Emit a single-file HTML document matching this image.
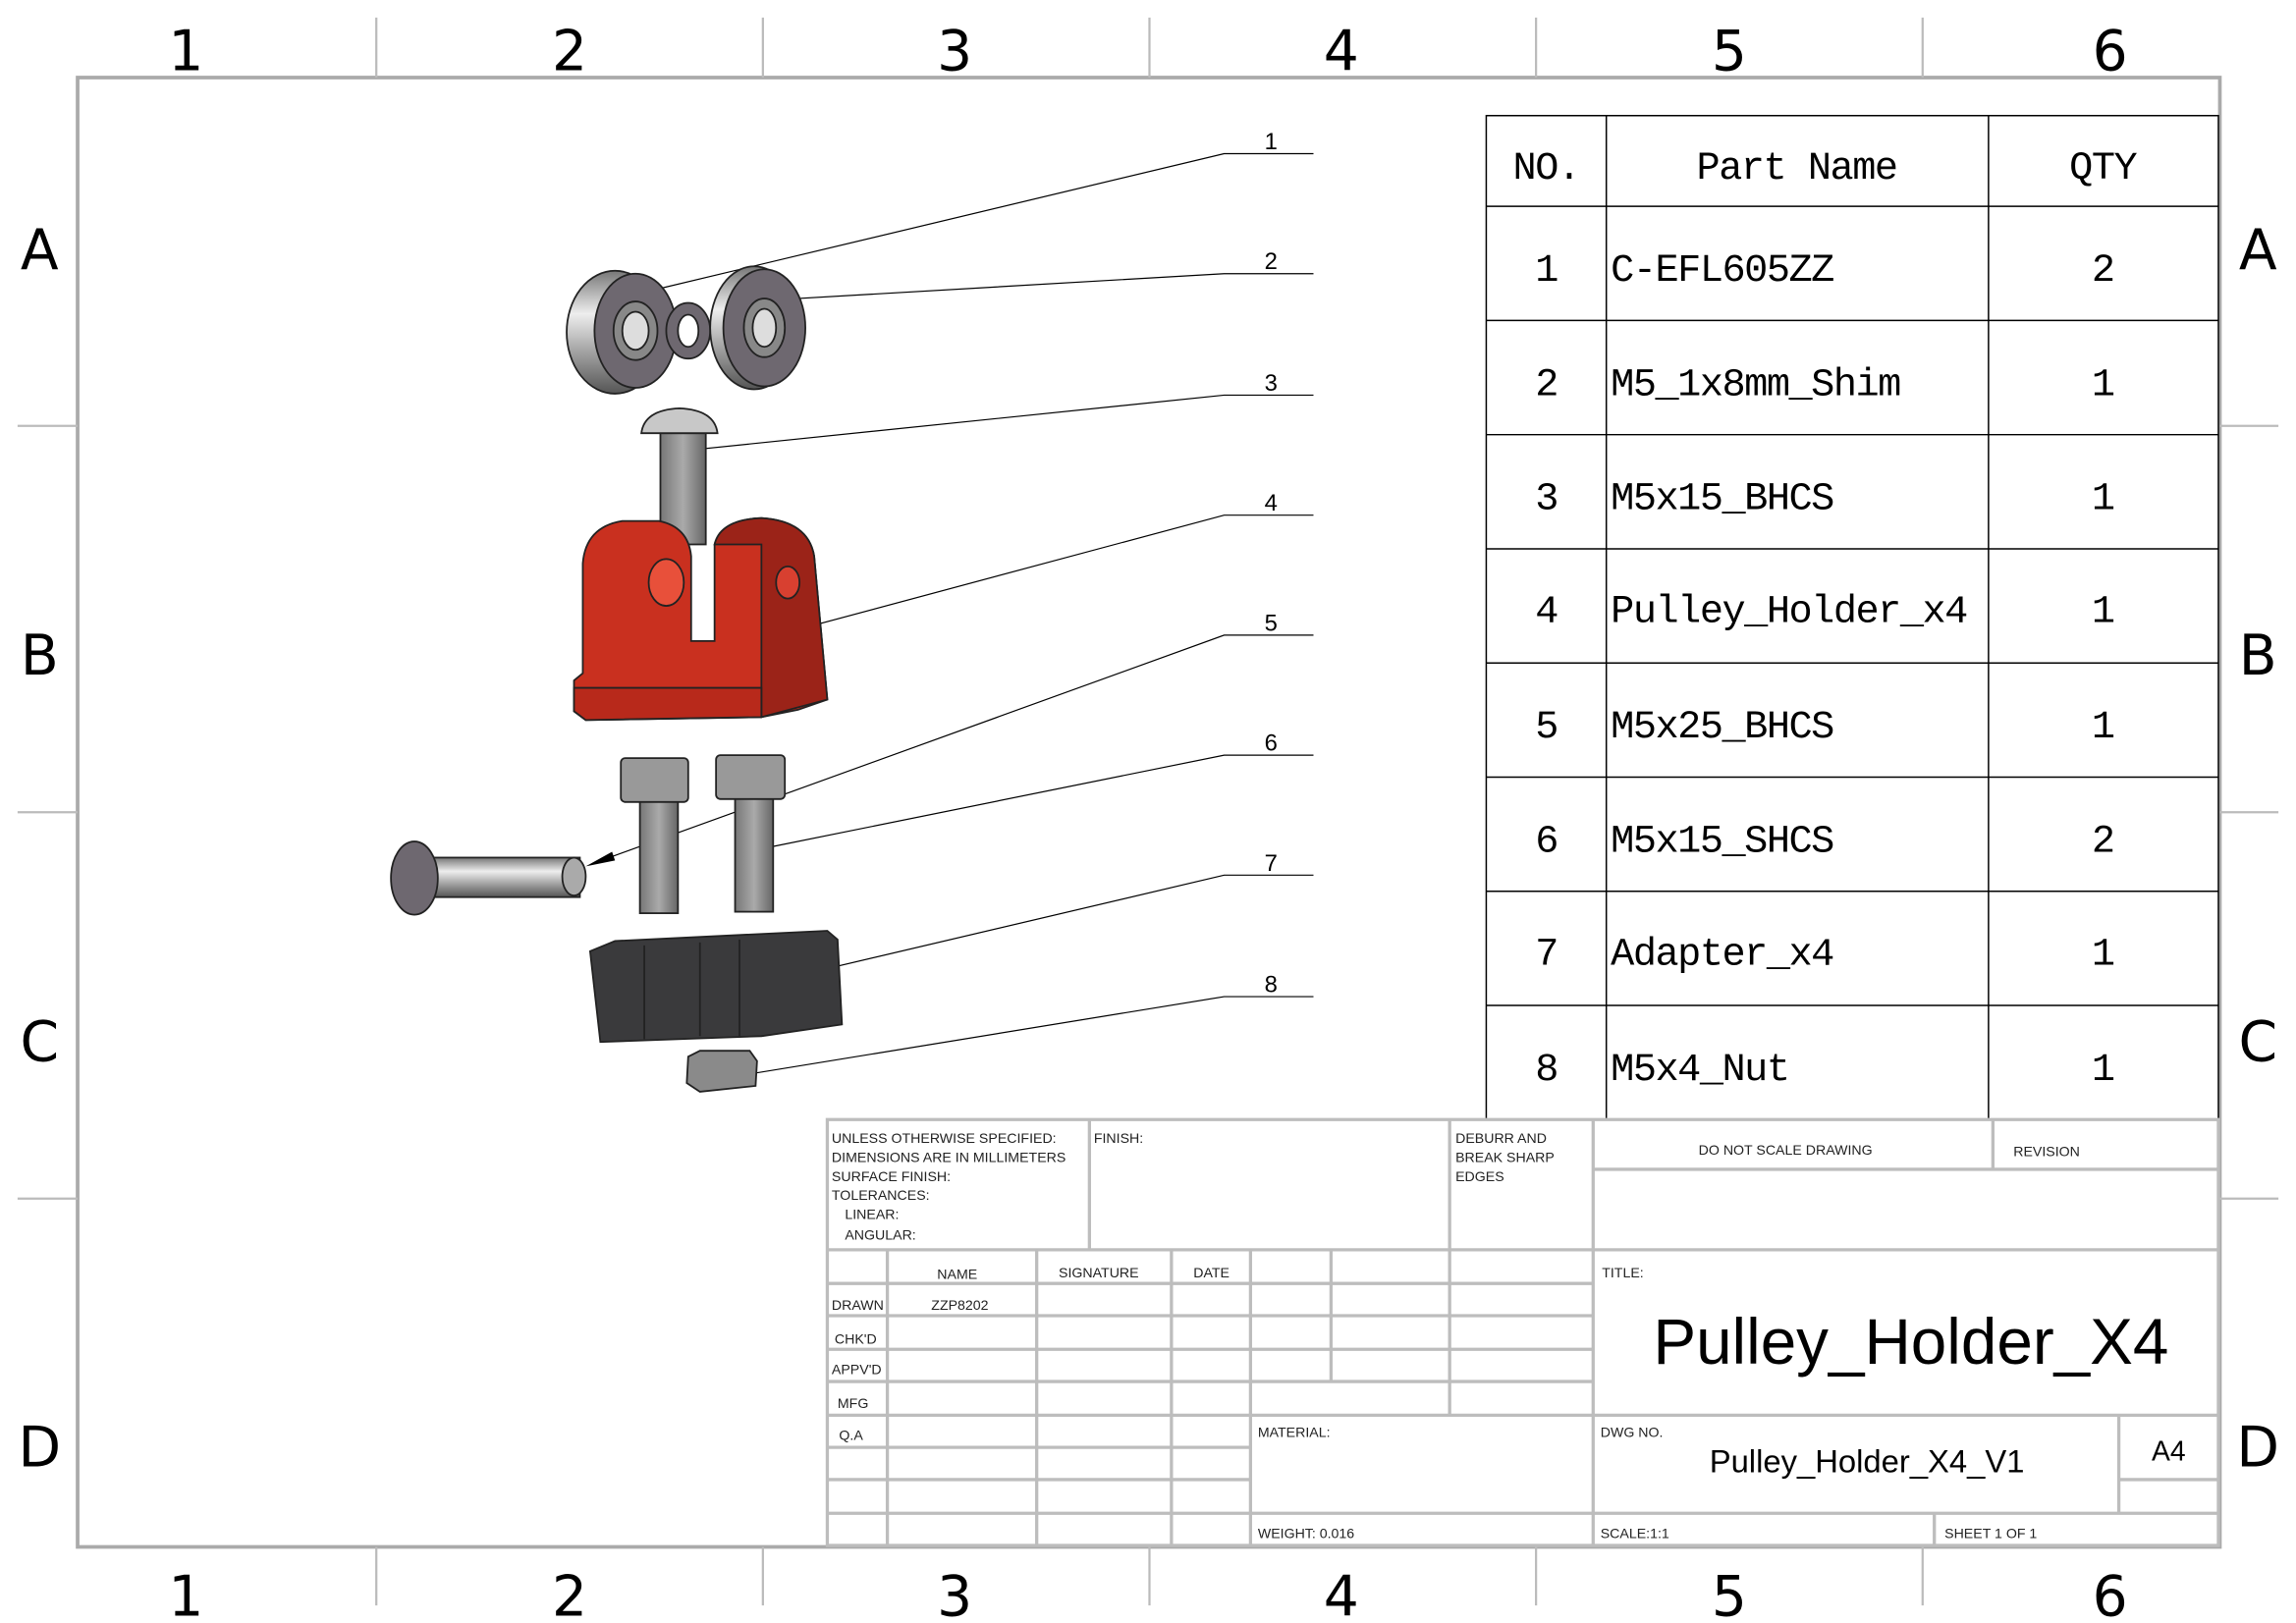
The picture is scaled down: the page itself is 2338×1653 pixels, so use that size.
<!DOCTYPE html>
<html><head><meta charset="utf-8"><style>
html,body{margin:0;padding:0;background:#fff;}
svg{display:block;}
.z{font-family:"DejaVu Sans","Liberation Sans",sans-serif;font-size:38px;fill:#000;text-anchor:middle;}
.m{font-family:"Liberation Mono",monospace;font-size:27px;fill:#000;letter-spacing:-1px;}
.s{font-family:"Liberation Sans",sans-serif;font-size:9.5px;fill:#222;}
.g{stroke:#bdbdbd;stroke-width:2.2;fill:none;}
.b{stroke:#000;stroke-width:1;fill:none;}
</style></head><body>
<svg width="2338" height="1653" viewBox="0 0 1568 1109" preserveAspectRatio="none" xmlns="http://www.w3.org/2000/svg">
<rect x="0" y="0" width="1568" height="1109" fill="#fff"/>
<rect x="53" y="53" width="1463" height="1004" fill="none" stroke="#aaa" stroke-width="2.5"/>
<g stroke="#bbb" stroke-width="1.5">
<line x1="257" y1="12" x2="257" y2="53"/><line x1="521" y1="12" x2="521" y2="53"/><line x1="785" y1="12" x2="785" y2="53"/><line x1="1049" y1="12" x2="1049" y2="53"/><line x1="1313" y1="12" x2="1313" y2="53"/>
<line x1="257" y1="1057" x2="257" y2="1097"/><line x1="521" y1="1057" x2="521" y2="1097"/><line x1="785" y1="1057" x2="785" y2="1097"/><line x1="1049" y1="1057" x2="1049" y2="1097"/><line x1="1313" y1="1057" x2="1313" y2="1097"/>
<line x1="12" y1="291" x2="53" y2="291"/><line x1="12" y1="555" x2="53" y2="555"/><line x1="12" y1="819" x2="53" y2="819"/>
<line x1="1516" y1="291" x2="1556" y2="291"/><line x1="1516" y1="555" x2="1556" y2="555"/><line x1="1516" y1="819" x2="1556" y2="819"/>
</g>
<g class="z">
<text x="127" y="48">1</text><text x="389" y="48">2</text><text x="652" y="48">3</text><text x="916" y="48">4</text><text x="1181" y="48">5</text><text x="1441" y="48">6</text>
<text x="127" y="1104">1</text><text x="389" y="1104">2</text><text x="652" y="1104">3</text><text x="916" y="1104">4</text><text x="1181" y="1104">5</text><text x="1441" y="1104">6</text>
<text x="27" y="184">A</text><text x="27" y="461">B</text><text x="27" y="725">C</text><text x="27" y="1002">D</text>
<text x="1542" y="184">A</text><text x="1542" y="461">B</text><text x="1542" y="725">C</text><text x="1542" y="1002">D</text>
</g>
<g class="b">
<rect x="1015" y="79" width="500" height="686"/>
<line x1="1097" y1="79" x2="1097" y2="765"/><line x1="1358" y1="79" x2="1358" y2="765"/>
<line x1="1015" y1="141" x2="1515" y2="141"/><line x1="1015" y1="219" x2="1515" y2="219"/><line x1="1015" y1="297" x2="1515" y2="297"/><line x1="1015" y1="375" x2="1515" y2="375"/><line x1="1015" y1="453" x2="1515" y2="453"/><line x1="1015" y1="531" x2="1515" y2="531"/><line x1="1015" y1="609" x2="1515" y2="609"/><line x1="1015" y1="687" x2="1515" y2="687"/>
</g>
<g class="m">
<text x="1056" y="122" text-anchor="middle">NO.</text><text x="1227" y="122" text-anchor="middle">Part Name</text><text x="1436" y="122" text-anchor="middle">QTY</text>
<text x="1056" y="192" text-anchor="middle">1</text><text x="1100" y="192">C-EFL605ZZ</text><text x="1436" y="192" text-anchor="middle">2</text>
<text x="1056" y="270" text-anchor="middle">2</text><text x="1100" y="270">M5_1x8mm_Shim</text><text x="1436" y="270" text-anchor="middle">1</text>
<text x="1056" y="348" text-anchor="middle">3</text><text x="1100" y="348">M5x15_BHCS</text><text x="1436" y="348" text-anchor="middle">1</text>
<text x="1056" y="425" text-anchor="middle">4</text><text x="1100" y="425">Pulley_Holder_x4</text><text x="1436" y="425" text-anchor="middle">1</text>
<text x="1056" y="504" text-anchor="middle">5</text><text x="1100" y="504">M5x25_BHCS</text><text x="1436" y="504" text-anchor="middle">1</text>
<text x="1056" y="582" text-anchor="middle">6</text><text x="1100" y="582">M5x15_SHCS</text><text x="1436" y="582" text-anchor="middle">2</text>
<text x="1056" y="659" text-anchor="middle">7</text><text x="1100" y="659">Adapter_x4</text><text x="1436" y="659" text-anchor="middle">1</text>
<text x="1056" y="738" text-anchor="middle">8</text><text x="1100" y="738">M5x4_Nut</text><text x="1436" y="738" text-anchor="middle">1</text>
</g>
<g class="g">
<rect x="565" y="765" width="950" height="291"/>
<line x1="565" y1="854" x2="1515" y2="854"/>
<line x1="744" y1="765" x2="744" y2="854"/><line x1="990" y1="765" x2="990" y2="854"/><line x1="1088" y1="765" x2="1088" y2="1056"/>
<line x1="1088" y1="799" x2="1515" y2="799"/><line x1="1361" y1="765" x2="1361" y2="799"/>
<line x1="565" y1="877" x2="1088" y2="877"/><line x1="565" y1="899" x2="1088" y2="899"/><line x1="565" y1="922" x2="1088" y2="922"/><line x1="565" y1="944" x2="1088" y2="944"/><line x1="565" y1="967" x2="1515" y2="967"/>
<line x1="565" y1="989" x2="854" y2="989"/><line x1="565" y1="1011" x2="854" y2="1011"/><line x1="565" y1="1034" x2="1515" y2="1034"/>
<line x1="606" y1="854" x2="606" y2="1056"/><line x1="708" y1="854" x2="708" y2="1056"/><line x1="800" y1="854" x2="800" y2="1056"/><line x1="854" y1="854" x2="854" y2="1056"/>
<line x1="909" y1="854" x2="909" y2="944"/><line x1="990" y1="854" x2="990" y2="967"/>
<line x1="1447" y1="967" x2="1447" y2="1034"/><line x1="1447" y1="1011" x2="1515" y2="1011"/><line x1="1321" y1="1034" x2="1321" y2="1056"/>
</g>
<g class="s">
<text x="568" y="781">UNLESS OTHERWISE SPECIFIED:</text><text x="568" y="794">DIMENSIONS ARE IN MILLIMETERS</text><text x="568" y="807">SURFACE FINISH:</text><text x="568" y="820">TOLERANCES:</text><text x="577" y="833">LINEAR:</text><text x="577" y="847">ANGULAR:</text>
<text x="747" y="781">FINISH:</text>
<text x="994" y="781">DEBURR AND</text><text x="994" y="794">BREAK SHARP</text><text x="994" y="807">EDGES</text>
<text x="1160" y="789">DO NOT SCALE DRAWING</text><text x="1375" y="790">REVISION</text>
<text x="640" y="874">NAME</text><text x="723" y="873">SIGNATURE</text><text x="815" y="873">DATE</text>
<text x="568" y="895">DRAWN</text><text x="636" y="895">ZZP8202</text>
<text x="570" y="918">CHK'D</text><text x="568" y="939">APPV'D</text><text x="572" y="962">MFG</text><text x="573" y="984">Q.A</text>
<text x="859" y="982">MATERIAL:</text><text x="1093" y="982">DWG NO.</text><text x="1094" y="873">TITLE:</text>
<text x="859" y="1051">WEIGHT: 0.016</text><text x="1093" y="1051">SCALE:1:1</text><text x="1328" y="1051">SHEET 1 OF 1</text>
</g>
<text x="1305" y="932" text-anchor="middle" font-family="Liberation Sans,sans-serif" font-size="44">Pulley_Holder_X4</text>
<text x="1275" y="1006" text-anchor="middle" font-family="Liberation Sans,sans-serif" font-size="22">Pulley_Holder_X4_V1</text>
<text x="1481" y="998" text-anchor="middle" font-family="Liberation Sans,sans-serif" font-size="19">A4</text>
<g stroke="#000" stroke-width="0.8" fill="none">
<polyline points="897,105 836,105 447,198"/><polyline points="897,187 836,187 527,205"/><polyline points="897,270 836,270 467,308"/><polyline points="897,352 836,352 538,432"/>
<polyline points="897,434 836,434 405,590"/><polyline points="897,516 836,516 520,580"/><polyline points="897,598 836,598 543,667"/><polyline points="897,681 836,681 505,735"/>
</g>
<polygon points="400,592 418,582 420,588" fill="#000"/>
<g font-family="Liberation Sans,sans-serif" font-size="16" fill="#000" text-anchor="middle">
<text x="868" y="102">1</text><text x="868" y="184">2</text><text x="868" y="267">3</text><text x="868" y="349">4</text><text x="868" y="431">5</text><text x="868" y="513">6</text><text x="868" y="595">7</text><text x="868" y="678">8</text>
</g>
<defs>
<linearGradient id="met" x1="0" y1="0" x2="0" y2="1"><stop offset="0" stop-color="#777"/><stop offset=".35" stop-color="#eee"/><stop offset=".7" stop-color="#999"/><stop offset="1" stop-color="#555"/></linearGradient>
<linearGradient id="shank" x1="0" y1="0" x2="1" y2="0"><stop offset="0" stop-color="#777"/><stop offset=".5" stop-color="#aaa"/><stop offset="1" stop-color="#666"/></linearGradient>
</defs>
<g stroke="#222" stroke-width="1.2">
<ellipse cx="420" cy="227" rx="33" ry="42" fill="url(#met)"/>
<ellipse cx="434" cy="226" rx="28" ry="39" fill="#6e6870"/>
<ellipse cx="434" cy="226" rx="15" ry="20" fill="#888"/>
<ellipse cx="434" cy="226" rx="9" ry="13" fill="#ddd"/>
<ellipse cx="470" cy="226" rx="15" ry="19" fill="#6e6870"/>
<ellipse cx="470" cy="226" rx="7" ry="11" fill="#fff"/>
<ellipse cx="515" cy="224" rx="30" ry="42" fill="url(#met)"/>
<ellipse cx="522" cy="224" rx="28" ry="40" fill="#6e6870"/>
<ellipse cx="522" cy="224" rx="14" ry="20" fill="#888"/>
<ellipse cx="522" cy="224" rx="8" ry="13" fill="#ddd"/>
<rect x="451" y="296" width="31" height="76" fill="url(#shank)"/>
<path d="M438,296 Q440,280 464,279 Q488,280 490,296 Z" fill="#c8c8c8"/>
<path d="M398,460 L398,385 Q400,360 425,356 L450,356 Q470,360 472,380 L472,438 L488,438 L488,372 Q492,355 520,354 Q552,356 556,380 L565,478 L545,485 L520,490 L400,492 L392,486 L392,465 Z" fill="#c9301f"/>
<path d="M488,372 Q492,355 520,354 Q552,356 556,380 L565,478 L520,490 L520,372 Z" fill="#9b2318"/>
<path d="M392,470 L520,470 L520,490 L400,492 L392,486 Z" fill="#b8291b"/>
<ellipse cx="455" cy="398" rx="12" ry="16" fill="#e8503a"/>
<ellipse cx="538" cy="398" rx="8" ry="11" fill="#d84030"/>
<rect x="280" y="586" width="116" height="27" fill="url(#met)"/>
<ellipse cx="283" cy="600" rx="16" ry="25" fill="#6e6870"/>
<ellipse cx="392" cy="599" rx="8" ry="13" fill="#aaa"/>
<rect x="437" y="545" width="26" height="79" fill="url(#shank)"/>
<rect x="424" y="518" width="46" height="30" rx="3" fill="#999"/>
<rect x="502" y="543" width="26" height="80" fill="url(#shank)"/>
<rect x="489" y="516" width="47" height="30" rx="3" fill="#999"/>
<path d="M403,650 L420,643 L565,636 L572,642 L575,700 L520,708 L410,712 Z" fill="#3a3a3c"/>
<line x1="440" y1="646" x2="440" y2="710"/><line x1="478" y1="644" x2="478" y2="708"/><line x1="505" y1="642" x2="505" y2="708"/>
<path d="M470,722 L478,718 L512,718 L517,725 L516,742 L478,746 L469,740 Z" fill="#8a8a8a"/>
</g>
</svg>
</body></html>
